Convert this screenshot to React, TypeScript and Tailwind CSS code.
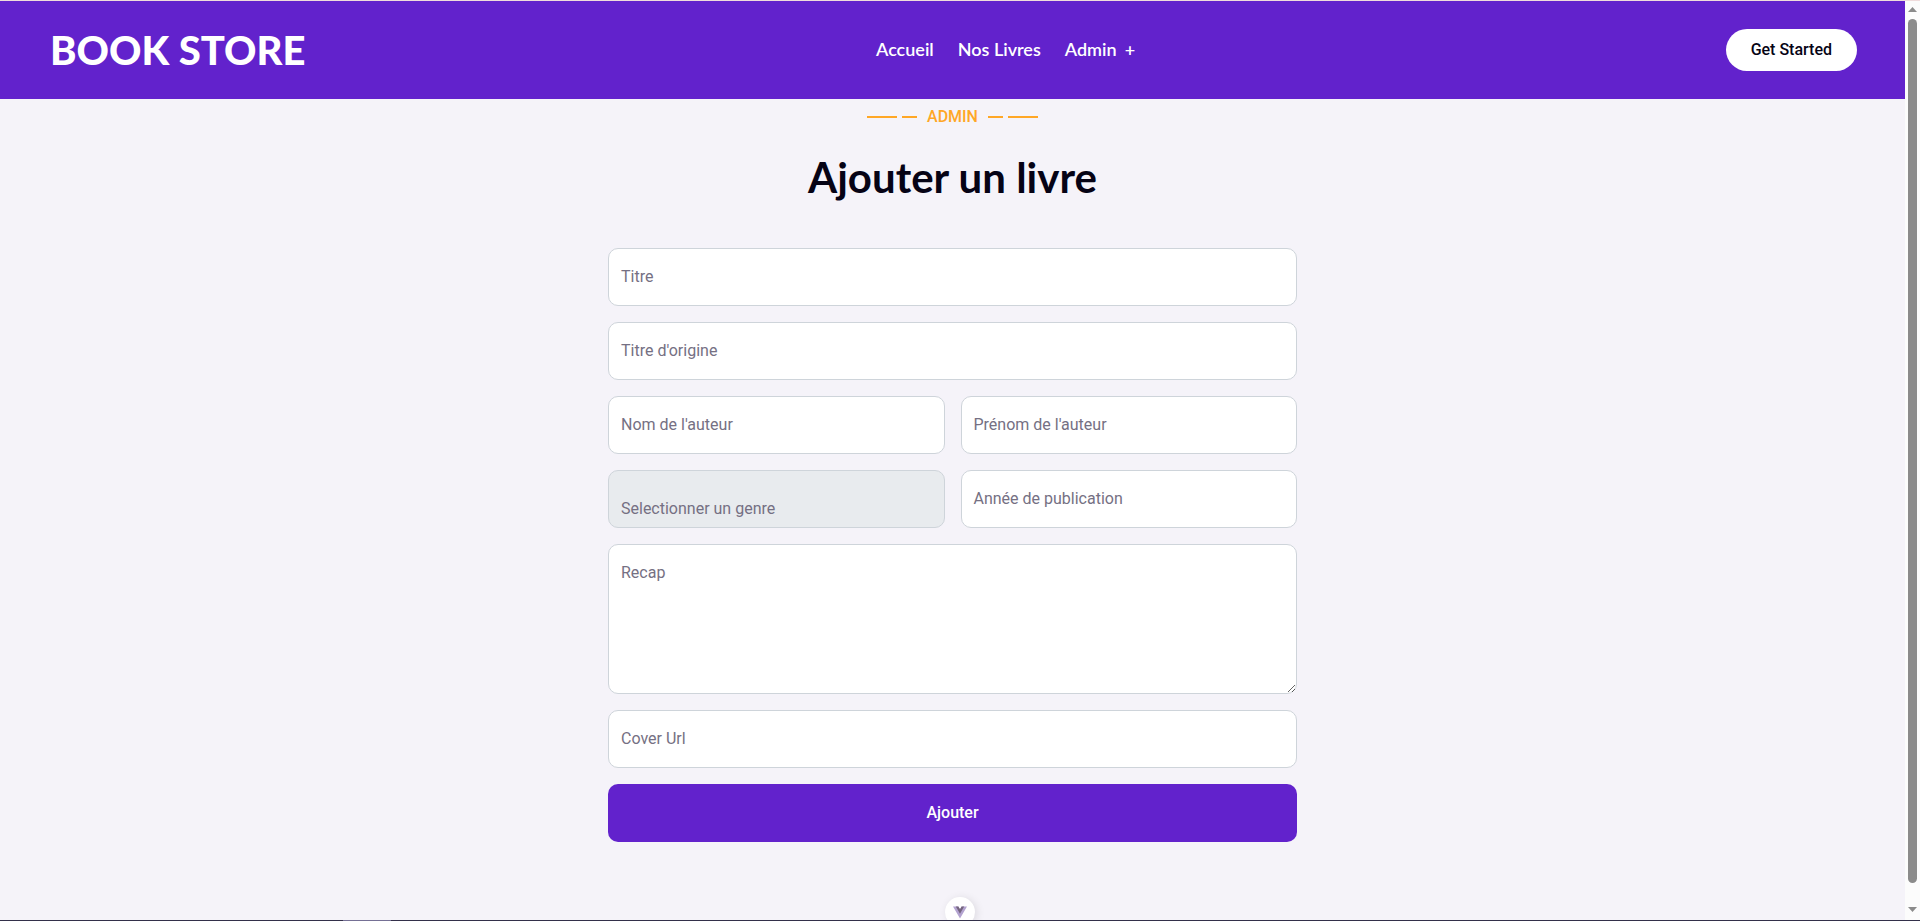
import { useId } from "react";

const control =
  "peer col-start-1 row-start-1 block w-full rounded-[10px] border border-[#ced4da] text-base leading-6 text-[#060315] focus:outline-2 focus:outline-[#6222cc]";
const floatingLabel =
  "pointer-events-none col-start-1 row-start-1 self-start justify-self-start px-[13px] pt-[17px] text-base leading-6 text-[#757083] peer-focus:pt-1 peer-focus:text-xs peer-[:not(:placeholder-shown)]:pt-1 peer-[:not(:placeholder-shown)]:text-xs";

function Field({ label, name }: { label: string; name: string }) {
  const id = useId();
  return (
    <div className="grid">
      <input id={id} name={name} type="text" placeholder=" " className={`${control} h-[58px] bg-white px-3 pt-4`} />
      <label htmlFor={id} className={floatingLabel}>
        {label}
      </label>
    </div>
  );
}

function GenreSelect() {
  const id = useId();
  return (
    <div className="grid">
      <select
        id={id}
        disabled
        defaultValue=""
        className={`${control} h-[58px] appearance-none bg-[#e8ebee] px-3 opacity-100`}
      >
        <option value="" />
      </select>
      <label
        htmlFor={id}
        className="pointer-events-none col-start-1 row-start-1 self-end justify-self-start px-[13px] pb-[7px] text-base leading-6 text-[#757083]"
      >
        Selectionner un genre
      </label>
    </div>
  );
}

function RecapField() {
  const id = useId();
  return (
    <div className="grid">
      <textarea id={id} name="recap" placeholder=" " className={`${control} h-[150px] resize-y bg-white px-3 pt-6`} />
      <label htmlFor={id} className={floatingLabel}>
        Recap
      </label>
    </div>
  );
}

function Header() {
  return (
    <header className="flex items-center justify-between bg-[#6222cc] pt-7 pr-12 pb-7 pl-[50px]">
      <a href="#" className="font-[Lato,sans-serif] text-[40px] leading-[42px] font-black text-white">
        BOOK STORE
      </a>
      <nav className="mr-5 flex gap-6 pb-0.5 font-[Lato,sans-serif] text-lg leading-7 font-semibold text-white">
        <a href="#accueil">Accueil</a>
        <a href="#livres">Nos Livres</a>
        <a href="#admin" className="flex gap-2">
          Admin <span>+</span>
        </a>
      </nav>
      <button type="button" className="h-[42px] rounded-full bg-white px-[25px] text-base font-medium text-[#060315]">
        Get Started
      </button>
    </header>
  );
}

function SectionTitle() {
  return (
    <div className="flex flex-col items-center pt-1.5">
      <p className="flex items-center text-base leading-6 font-medium text-[#ffa726]">
        <span className="mr-[5px] h-0.5 w-[30px] bg-[#ffa726]" />
        <span className="mr-2.5 h-0.5 w-[15px] bg-[#ffa726]" />
        ADMIN
        <span className="ml-2.5 h-0.5 w-[15px] bg-[#ffa726]" />
        <span className="ml-[5px] h-0.5 w-[30px] bg-[#ffa726]" />
      </p>
      <h1 className="mt-6 mb-[47px] font-[Lato,sans-serif] text-[42px] leading-[48px] font-bold text-[#060315]">
        Ajouter un livre
      </h1>
    </div>
  );
}

function BookForm() {
  return (
    <form className="mx-auto flex w-full max-w-[689px] flex-col gap-4" onSubmit={(e) => e.preventDefault()}>
      <Field label="Titre" name="title" />
      <Field label="Titre d'origine" name="originalTitle" />
      <div className="grid grid-cols-2 gap-4">
        <Field label="Nom de l'auteur" name="lastName" />
        <Field label="Prénom de l'auteur" name="firstName" />
        <GenreSelect />
        <Field label="Année de publication" name="year" />
      </div>
      <RecapField />
      <Field label="Cover Url" name="cover" />
      <button type="submit" className="h-[58px] w-full rounded-[10px] bg-[#6222cc] text-base font-medium text-white">
        Ajouter
      </button>
    </form>
  );
}

function ScrollRail() {
  return (
    <div aria-hidden="true" className="flex w-[15px] shrink-0 flex-col items-center bg-[#fcfcfc] pt-1.5 pb-2">
      <svg width="9" height="5" viewBox="0 0 9 5" className="shrink-0">
        <path d="M4.5 0 9 5H0Z" fill="#8b8b8b" />
      </svg>
      <div className="mt-[7px] mb-6 w-[9px] flex-1 rounded-full bg-[#8b8b8b]" />
      <svg width="9" height="5" viewBox="0 0 9 5" className="shrink-0">
        <path d="M4.5 5 9 0H0Z" fill="#8b8b8b" />
      </svg>
    </div>
  );
}

export default function App() {
  return (
    <div className="relative flex h-screen flex-col overflow-hidden border-t border-t-[#f0dcdc] bg-[#f5f3f9] font-[Roboto,sans-serif]">
      <div className="flex min-h-0 flex-1">
        <div className="min-w-0 flex-1">
          <Header />
          <main>
            <SectionTitle />
            <BookForm />
          </main>
        </div>
        <ScrollRail />
      </div>
      <button
        type="button"
        aria-label="Vue"
        className="absolute -bottom-1.5 left-1/2 flex size-[30px] -translate-x-1/2 items-center justify-center rounded-full bg-white shadow-[2px_1px_8px_rgba(0,0,0,0.1)]"
      >
        <svg width="14" height="13" viewBox="0 0 256 221">
          <path d="M204.8 0H256L128 220.8 0 0h97.9L128 51.2 157.4 0Z" fill="#b3a3d0" />
          <path d="M50.6 0 128 133.1 204.8 0h-47.4L128 51.2 97.9 0Z" fill="#75657f" />
        </svg>
      </button>
      <div className="relative flex h-px shrink-0 bg-[#33304a]">
        <span className="ml-[343px] w-12 bg-[#757095]" />
      </div>
    </div>
  );
}
